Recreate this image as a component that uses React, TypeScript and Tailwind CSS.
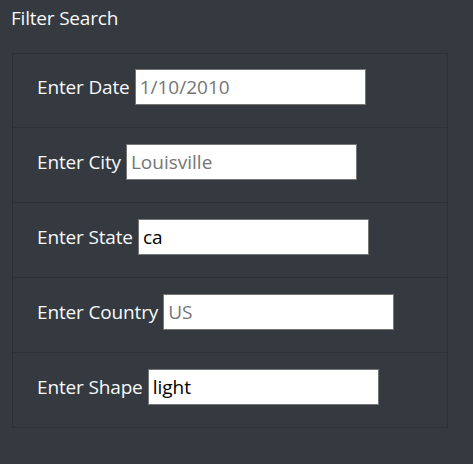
const filters = [
  { label: "Enter Date", placeholder: "1/10/2010", value: "" },
  { label: "Enter City", placeholder: "Louisville", value: "" },
  { label: "Enter State", placeholder: "", value: "ca" },
  { label: "Enter Country", placeholder: "US", value: "" },
  { label: "Enter Shape", placeholder: "", value: "light" },
];

export default function App() {
  return (
    <div
      className="min-h-[464px] w-full bg-[#343a40] text-[#f8f9fa]"
      style={{ fontFamily: '"Open Sans", "Noto Sans", sans-serif' }}
    >
      <div className="pl-[11px] pt-[5px] text-[19px] leading-[26px] tracking-[-0.2px]">Filter Search</div>
      <ul className="ml-3 mt-[22px] w-[436px] border border-[#2c3136]">
        {filters.map((f, i) => (
          <li
            key={i}
            className={`flex items-center pl-6 pb-[22px] ${
              i > 0 ? "border-t border-[#2c3136] pt-[16px]" : "pt-[15px]"
            }`}
          >
            <label className="text-[19px] leading-[28px] tracking-[-0.15px]">{f.label}</label>
            <input
              type="text"
              placeholder={f.placeholder}
              defaultValue={f.value}
              className="ml-[5px] h-[36px] w-[231px] border border-[#767676] bg-white px-[4px] text-[19px] text-black placeholder:text-[#757575] outline-none"
            />
          </li>
        ))}
      </ul>
    </div>
  );
}
